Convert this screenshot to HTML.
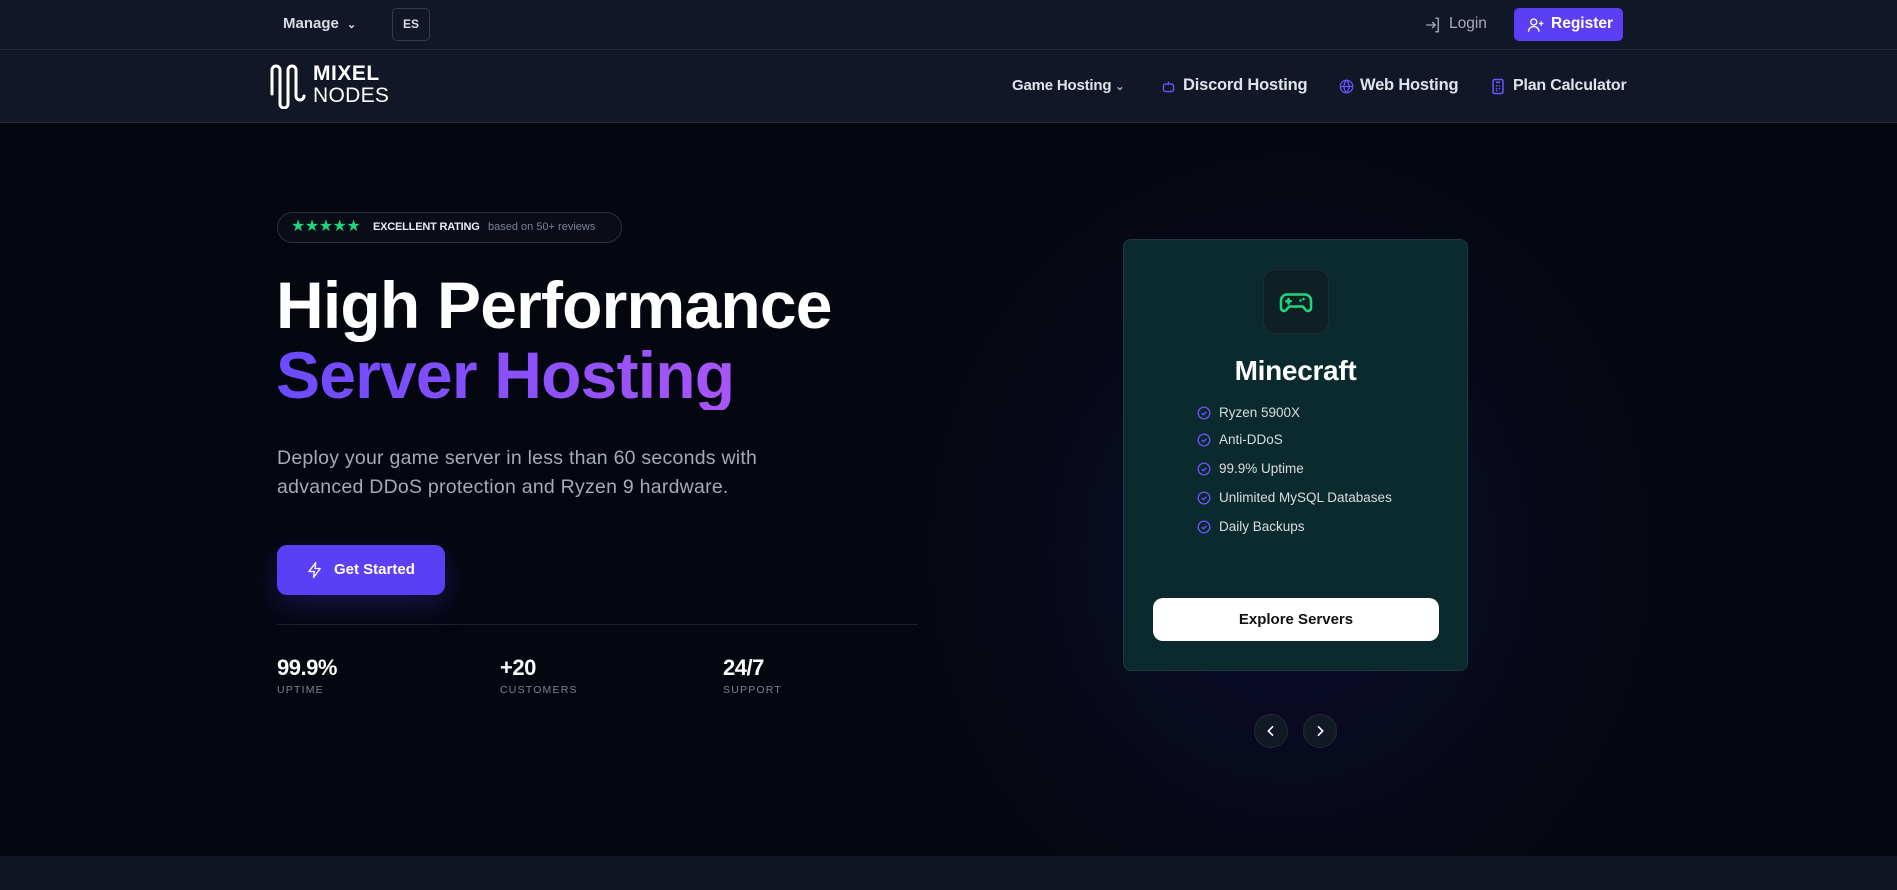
<!DOCTYPE html>
<html><head><meta charset="utf-8"><style>
*{margin:0;padding:0;box-sizing:border-box}
body{width:1897px;height:890px;overflow:hidden;background:#050710;font-family:"Liberation Sans",sans-serif;position:relative;color:#fff}
.abs{position:absolute}
.top{left:0;top:0;width:1897px;height:50px;background:#111726;border-bottom:1px solid #252b3a}
.nav{left:0;top:50px;width:1897px;height:73px;background:#111726;border-bottom:1px solid #252b3a}
.hero{left:0;top:123px;width:1897px;height:733px;background:radial-gradient(ellipse 380px 420px at 1290px 430px,#0c0b2e 0%,#080a1e 50%,rgba(5,7,16,0) 100%),#050710}
.bottom{left:0;top:856px;width:1897px;height:34px;background:#0f1522}
.navi{font-size:16px;font-weight:bold;color:#dfe3ea;top:76px;letter-spacing:-0.2px}
.feat{left:1197px;font-size:13.5px;color:#d9dde3;display:flex;align-items:center;gap:8px}
.stat{font-size:22px;font-weight:bold;top:655px;letter-spacing:-0.5px}
.lbl{font-size:10.5px;letter-spacing:1.2px;color:#7c8394;top:684px}
</style></head><body>
<div class="abs top"></div>
<div class="abs nav"></div>
<div class="abs hero"></div>
<div class="abs bottom"></div>

<div class="abs" style="left:283px;top:15px;font-size:15px;font-weight:bold;color:#d9dde5">Manage <span style="font-size:11px;margin-left:4px">&#8964;</span></div>
<div class="abs" style="left:392px;top:8px;width:38px;height:33px;border:1px solid #343b4b;border-radius:5px;font-size:12px;font-weight:bold;color:#d9dde5;text-align:center;line-height:31px">ES</div>

<svg class="abs" style="left:1424px;top:16px" width="18" height="18" viewBox="0 0 24 24" fill="none" stroke="#a6adbb" stroke-width="1.8"><path d="M15 3h4v18h-4M3 12h12M11 8l4 4-4 4"/></svg>
<div class="abs" style="left:1449px;top:15px;font-size:15.5px;color:#a6adbb">Login</div>
<div class="abs" style="left:1514px;top:8px;width:109px;height:33px;background:#5a3ff5;border-radius:5px;"></div>
<svg class="abs" style="left:1527px;top:16px" width="18" height="18" viewBox="0 0 24 24" fill="none" stroke="#fff" stroke-width="1.8"><circle cx="9" cy="8" r="4"/><path d="M2 21c0-4 3-7 7-7s7 3 7 7M19 7v6M16 10h6"/></svg>
<div class="abs" style="left:1551px;top:15px;font-size:15.5px;font-weight:bold">Register</div>

<svg class="abs" style="left:270px;top:64px" width="36" height="45" viewBox="0 0 36 45" fill="none" stroke="#fff" stroke-width="3" stroke-linecap="round"><path d="M2 30V6a4 4 0 0 1 8 0v34a4 4 0 0 0 8 0V6a4 4 0 0 1 8 0v26a4 4 0 0 0 8 0"/></svg>
<div class="abs" style="left:313px;top:63px;font-size:21px;font-weight:bold;letter-spacing:0.5px;line-height:22px">MIXEL</div>
<div class="abs" style="left:313px;top:85px;font-size:21px;letter-spacing:0.3px;line-height:22px">NODES</div>

<div class="abs navi" style="left:1012px;font-size:15px;top:77px">Game Hosting <span style="font-size:11px;color:#aab">&#8964;</span></div>
<svg class="abs" style="left:1161px;top:79px" width="15" height="15" viewBox="0 0 24 24" fill="none" stroke="#6d52ff" stroke-width="2.2"><rect x="4" y="8" width="16" height="12" rx="3"/><path d="M12 4v4M9 14h.01M15 14h.01"/></svg>
<div class="abs navi" style="left:1183px;font-size:16.5px">Discord Hosting</div>
<svg class="abs" style="left:1339px;top:79px" width="15" height="15" viewBox="0 0 24 24" fill="none" stroke="#6d52ff" stroke-width="2"><circle cx="12" cy="12" r="10"/><path d="M2 12h20M12 2c3 3 4 6 4 10s-1 7-4 10c-3-3-4-6-4-10s1-7 4-10z"/></svg>
<div class="abs navi" style="left:1360px;font-size:16.5px">Web Hosting</div>
<svg class="abs" style="left:1491px;top:78px" width="14" height="17" viewBox="0 0 20 24" fill="none" stroke="#6d52ff" stroke-width="2.2"><rect x="3" y="2" width="14" height="20" rx="2"/><path d="M7 6h6M7 11h2M11 11h2M7 15h2M11 15h2M7 18h2"/></svg>
<div class="abs navi" style="left:1513px;font-size:16px;top:77px">Plan Calculator</div>

<div class="abs" style="left:277px;top:212px;width:345px;height:31px;border:1px solid #2a3040;border-radius:16px;background:#0a0d18"></div>
<div class="abs" style="left:291px;top:216px;color:#1fd67a;font-size:16px;letter-spacing:-0.5px">★★★★★</div>
<div class="abs" style="left:373px;top:221px;font-size:11px;font-weight:bold;color:#e9ecf2;letter-spacing:-0.2px">EXCELLENT RATING</div>
<div class="abs" style="left:488px;top:221px;font-size:11px;color:#7a8192">based on 50+ reviews</div>

<div class="abs" style="left:276px;top:270px;font-size:66px;line-height:70px;letter-spacing:-0.8px;font-weight:bold">High Performance</div>
<div class="abs" style="left:276px;top:340px;font-size:66px;line-height:70px;letter-spacing:-0.8px;font-weight:bold;background:linear-gradient(90deg,#6a4bff,#a855f7);-webkit-background-clip:text;background-clip:text;color:transparent">Server Hosting</div>
<div class="abs" style="left:277px;top:444px;font-size:19.5px;line-height:29px;color:#a4aab8;width:560px;letter-spacing:0.25px">Deploy your game server in less than 60 seconds with<br>advanced DDoS protection and Ryzen 9 hardware.</div>

<div class="abs" style="left:277px;top:545px;width:168px;height:50px;background:#5a3ff5;border-radius:10px;box-shadow:0 10px 30px rgba(80,60,240,0.25)"></div>
<svg class="abs" style="left:306px;top:560px" width="18" height="20" viewBox="0 0 24 24" fill="none" stroke="#fff" stroke-width="1.8" stroke-linejoin="round"><path d="M13 2L4 14h7l-1 8 9-12h-7z"/></svg>
<div class="abs" style="left:334px;top:561px;font-size:15px;font-weight:bold">Get Started</div>

<div class="abs" style="left:277px;top:624px;width:641px;height:1px;background:#1b2030"></div>
<div class="abs stat" style="left:277px">99.9%</div><div class="abs lbl" style="left:277px">UPTIME</div>
<div class="abs stat" style="left:500px">+20</div><div class="abs lbl" style="left:500px">CUSTOMERS</div>
<div class="abs stat" style="left:723px">24/7</div><div class="abs lbl" style="left:723px">SUPPORT</div>

<div class="abs" style="left:1123px;top:239px;width:345px;height:432px;background:#0a2a2d;border:1px solid #1e3a3e;border-radius:8px"></div>
<div class="abs" style="left:1263px;top:269px;width:66px;height:65px;background:#0e1f26;border:1px solid #1c2d33;border-radius:12px"></div>
<svg class="abs" style="left:1278px;top:284px" width="36" height="36" viewBox="0 0 24 24" fill="none" stroke="#1fd67a" stroke-width="1.7" stroke-linecap="round" stroke-linejoin="round"><path d="M6 7h12a4 4 0 0 1 4 4v5a2 2 0 0 1-3.5 1.3L16.5 15h-9l-2 2.3A2 2 0 0 1 2 16v-5a4 4 0 0 1 4-4z"/><path d="M7 10v3M5.5 11.5h3M15 11h.01M17 10h.01"/></svg>
<div class="abs" style="left:1123px;width:345px;text-align:center;top:355px;font-size:28px;font-weight:bold;letter-spacing:-0.3px">Minecraft</div>
<div class="abs feat" style="top:405px"><svg width="14" height="14" viewBox="0 0 24 24" fill="none" stroke="#6d52ff" stroke-width="2.2"><circle cx="12" cy="12" r="10"/><path d="M8 12l3 3 5-5"/></svg>Ryzen 5900X</div>
<div class="abs feat" style="top:432px"><svg width="14" height="14" viewBox="0 0 24 24" fill="none" stroke="#6d52ff" stroke-width="2.2"><circle cx="12" cy="12" r="10"/><path d="M8 12l3 3 5-5"/></svg>Anti-DDoS</div>
<div class="abs feat" style="top:461px"><svg width="14" height="14" viewBox="0 0 24 24" fill="none" stroke="#6d52ff" stroke-width="2.2"><circle cx="12" cy="12" r="10"/><path d="M8 12l3 3 5-5"/></svg>99.9% Uptime</div>
<div class="abs feat" style="top:490px"><svg width="14" height="14" viewBox="0 0 24 24" fill="none" stroke="#6d52ff" stroke-width="2.2"><circle cx="12" cy="12" r="10"/><path d="M8 12l3 3 5-5"/></svg>Unlimited MySQL Databases</div>
<div class="abs feat" style="top:519px"><svg width="14" height="14" viewBox="0 0 24 24" fill="none" stroke="#6d52ff" stroke-width="2.2"><circle cx="12" cy="12" r="10"/><path d="M8 12l3 3 5-5"/></svg>Daily Backups</div>
<div class="abs" style="left:1153px;top:598px;width:286px;height:43px;background:#fff;border-radius:10px;color:#111;font-size:15px;font-weight:bold;text-align:center;line-height:43px">Explore Servers</div>

<div class="abs" style="left:1254px;top:714px;width:34px;height:34px;border-radius:50%;background:#111826;border:1px solid #222a38"></div>
<svg class="abs" style="left:1263px;top:723px" width="16" height="16" viewBox="0 0 24 24" fill="none" stroke="#fff" stroke-width="2.4"><path d="M15 5l-7 7 7 7"/></svg>
<div class="abs" style="left:1303px;top:714px;width:34px;height:34px;border-radius:50%;background:#111826;border:1px solid #222a38"></div>
<svg class="abs" style="left:1312px;top:723px" width="16" height="16" viewBox="0 0 24 24" fill="none" stroke="#fff" stroke-width="2.4"><path d="M9 5l7 7-7 7"/></svg>
</body></html>
